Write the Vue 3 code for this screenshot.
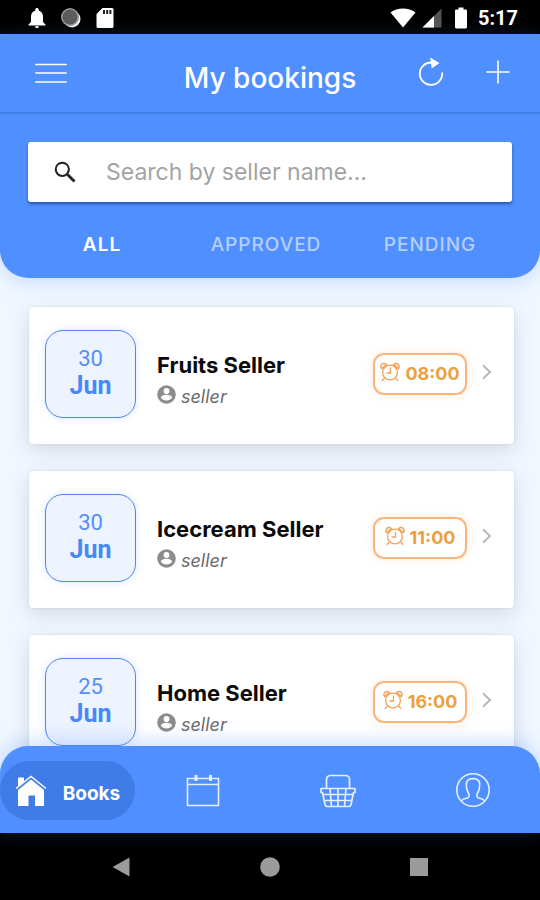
<script setup>
import { ref } from 'vue'

const tabs = ['ALL', 'APPROVED', 'PENDING']
const activeTab = ref('ALL')
const query = ref('')

const bookings = [
  { day: '30', month: 'Jun', name: 'Fruits Seller', role: 'seller', time: '08:00' },
  { day: '30', month: 'Jun', name: 'Icecream Seller', role: 'seller', time: '11:00' },
  { day: '25', month: 'Jun', name: 'Home Seller', role: 'seller', time: '16:00' },
]
</script>

<template>
  <div class="screen">
    <div class="status">
      <div class="status-group status-left">
        <svg width="18" height="22" viewBox="0 0 18 22" fill="#fff">
          <path d="M9 1c1 0 1.700.7 1.700 1.600v.8C13.500 4.200 15 6.600 15 9.500V15l2.500 2.400V18.500H.5v-1.100L3 15V9.500c0-2.900 1.500-5.300 4.300-6.100v-.8C7.300 1.700 8 1 9 1z" />
          <path d="M7 19.200h4a2 2 0 0 1-4 0z" />
        </svg>
        <svg width="22" height="22" viewBox="0 0 22 22">
          <circle cx="12" cy="12" r="8.500" fill="#eee" />
          <circle cx="10" cy="10" r="9" fill="#999" />
          <circle cx="10" cy="10" r="7.500" fill="#5c5c5c" />
        </svg>
        <svg width="18" height="22" viewBox="0 0 18 22">
          <path d="M6.500 1H16a1.500 1.500 0 0 1 1.500 1.500v17A1.500 1.500 0 0 1 16 21H2a1.500 1.500 0 0 1-1.500-1.500V7z" fill="#fff" />
          <path d="M7 3h2v4H7zM10.200 3h2v4h-2zM13.400 3h2v4h-2z" fill="#222" />
        </svg>
      </div>
      <div class="status-group status-right">
        <svg width="26" height="20" viewBox="0 0 26 20" fill="#fff">
          <path d="M.5 4.500C4 1.800 8.300.5 13 .5s9 1.300 12.500 4L13 19.500z" />
        </svg>
        <svg width="20" height="20" viewBox="0 0 20 20">
          <path d="M19.500.5v19H.5z" fill="#555" />
          <path d="M12 8v11.500H.5z" fill="#fff" />
        </svg>
        <svg class="battery" width="14" height="22" viewBox="0 0 14 22" fill="#fff">
          <path d="M4.500.5h5v2h2.200c.7 0 1.300.5 1.300 1.200v16.600c0 .7-.6 1.200-1.300 1.200H2.300C1.600 21.500 1 21 1 20.300V3.700c0-.7.6-1.200 1.300-1.200h2.200z" />
        </svg>
        <span class="clock">5:17</span>
      </div>
    </div>

    <header class="header">
      <div class="appbar">
        <button class="icon-btn menu" type="button" aria-label="Menu">
          <svg width="32" height="22" viewBox="0 0 32 22" stroke="#fff" stroke-width="1.600" stroke-linecap="round">
            <path d="M.8 2.500h30.400M.8 11h30.400M.8 20h30.400" />
          </svg>
        </button>
        <h1 class="title">My bookings</h1>
        <div class="actions">
          <button class="icon-btn" type="button" aria-label="Refresh">
            <svg width="26" height="30" viewBox="0 0 26 30" fill="none">
              <path d="M13.500 5.500A11.200 11.200 0 1 0 24.200 16.200" stroke="#fff" stroke-width="1.800" stroke-linecap="round" />
              <path d="M12.200.5 21.500 6l-7.800 5.500z" fill="#fff" />
            </svg>
          </button>
          <button class="icon-btn" type="button" aria-label="Add booking">
            <svg width="24" height="24" viewBox="0 0 24 24" stroke="#fff" stroke-width="1.600" stroke-linecap="round">
              <path d="M12 1v22M1 12h22" />
            </svg>
          </button>
        </div>
      </div>

      <div class="search">
        <label for="seller-search" aria-label="Search sellers">
          <svg width="22" height="22" viewBox="0 0 22 22" fill="none" stroke="#222">
            <circle cx="8.300" cy="8.300" r="6.600" stroke-width="2" />
            <path d="M13.500 13.500 20.500 20.500" stroke-width="2.800" />
          </svg>
        </label>
        <input id="seller-search" v-model="query" type="text" placeholder="Search by seller name..." />
      </div>

      <div class="tabs">
        <button
          v-for="tab in tabs"
          :key="tab"
          type="button"
          class="tab"
          :class="{ active: tab === activeTab }"
          @click="activeTab = tab"
        >{{ tab }}</button>
      </div>
    </header>

    <main class="list">
      <article v-for="b in bookings" :key="b.name" class="card">
        <div class="date">
          <span class="day">{{ b.day }}</span>
          <span class="month">{{ b.month }}</span>
        </div>
        <div class="info">
          <h2 class="name">{{ b.name }}</h2>
          <p class="role">
            <svg width="19" height="19" viewBox="0 0 19 19">
              <circle cx="9.500" cy="9.500" r="9.300" fill="#8c8c8c" />
              <circle cx="9.500" cy="6" r="2.900" fill="#fff" />
              <path d="M3.800 12.600c0-1.900 3.600-2.900 5.700-2.900s5.700 1 5.700 2.900c-1.200 1.900-3.300 3-5.700 3s-4.500-1.100-5.700-3z" fill="#fff" />
            </svg>
            <span>{{ b.role }}</span>
          </p>
        </div>
        <div class="time">
          <svg width="20" height="20" viewBox="0 0 20 20" fill="none" stroke="#f0a35c" stroke-width="1.300" stroke-linecap="round">
            <circle cx="10" cy="10.500" r="7.400" />
            <path d="M10.500 6v5H7M4 16.500l-1.800 2M16 16.500l1.800 2" />
            <path d="M1.600 6.600A3 3 0 1 1 6.500 2.700zM18.400 6.600a3 3 0 1 0-4.900-3.900z" stroke-width="1.500" />
          </svg>
          <span>{{ b.time }}</span>
        </div>
        <svg class="chevron" width="11" height="16" viewBox="0 0 11 16" fill="none" stroke="#b8b8b8" stroke-width="2">
          <path d="M2 1.200 9 8l-7 6.800" />
        </svg>
      </article>
    </main>

    <nav class="bottom">
      <a class="nav-item current" href="#books">
        <svg width="32" height="32" viewBox="0 0 32 32">
          <path d="M3 2.500h6v4L3 12z" fill="#fff" />
          <path d="M1 13.500 16 1.500l15 12" fill="none" stroke="#fff" stroke-width="1.500" />
          <path d="M3 15 16 4.500 29 15V31h-9V20.500h-6.500V31H3z" fill="#fff" />
        </svg>
        <span>Books</span>
      </a>
      <a class="nav-item" href="#calendar" aria-label="Calendar">
        <svg width="34" height="34" viewBox="0 0 34 34" fill="none" stroke="#e4efff" stroke-width="1.600">
          <path d="M1.500 4.500h31v27h-31zM1.500 10.500h31" />
          <path d="M10 1v6M24.500 1v6" stroke-width="3" />
        </svg>
      </a>
      <a class="nav-item" href="#basket" aria-label="Basket">
        <svg width="36" height="34" viewBox="0 0 36 34" fill="none" stroke="#e4efff" stroke-width="1.700" stroke-linejoin="round">
          <path d="M6.500 14.500V5.500a4 4 0 0 1 4-4h15a4 4 0 0 1 4 4v9" />
          <path d="M1 14.500h34v4h-1.500l-2.500 12a2.500 2.500 0 0 1-2.500 2H7.500a2.500 2.500 0 0 1-2.500-2L2.500 18.500H1z" />
          <path d="M2.500 20.500h31M4 26.500h28M10 14.500l1.500 18M18 14.500v18M26 14.500l-1.500 18" />
        </svg>
      </a>
      <a class="nav-item" href="#profile" aria-label="Profile">
        <svg width="36" height="36" viewBox="0 0 36 36" fill="none" stroke="#e4efff" stroke-width="1.600">
          <circle cx="18" cy="17" r="16.200" />
          <path d="M6.200 28c1.500-2.300 4.300-2.500 6.600-3.300 1.500-.6 1.700-2.700.8-4.200-1.700-2.700-2.300-5.500-2.300-9C11.300 7.500 14 5.600 18 5.600s6.700 1.900 6.700 5.900c0 3.500-.6 6.300-2.300 9-.9 1.500-.7 3.600.8 4.200 2.300.8 5.100 1 6.600 3.300" />
        </svg>
      </a>
    </nav>

    <div class="system">
      <button class="icon-btn" type="button" aria-label="Back">
        <svg width="20" height="20" viewBox="0 0 20 20" fill="#9b9b9b"><path d="M18.500.5v19L1.500 10z" /></svg>
      </button>
      <button class="icon-btn" type="button" aria-label="Home">
        <svg width="20" height="20" viewBox="0 0 20 20" fill="#9b9b9b"><circle cx="10" cy="10" r="9.800" /></svg>
      </button>
      <button class="icon-btn" type="button" aria-label="Overview">
        <svg width="20" height="20" viewBox="0 0 20 20" fill="#9b9b9b"><rect x="1" y="1" width="18" height="18" /></svg>
      </button>
    </div>
  </div>
</template>

<style>
body {
  margin: 0;
}
</style>

<style scoped>
* {
  box-sizing: border-box;
}

.screen {
  display: flex;
  flex-direction: column;
  height: 100vh;
  overflow: hidden;
  background: #f1f7ff;
  font-family: Inter, "Open Sans", sans-serif;
}

svg {
  display: block;
  flex: none;
}

button {
  font: inherit;
  border: 0;
  padding: 0;
  background: none;
  cursor: pointer;
}

.status {
  flex: none;
  display: flex;
  justify-content: space-between;
  align-items: center;
  height: 34px;
  padding: 2px 22px 0 28px;
  background: #000;
}

.status-group {
  display: flex;
  align-items: center;
}

.status-left {
  gap: 14px;
}

.status-right {
  gap: 6px;
}

.battery {
  margin: 0 4px 0 6px;
}

.clock {
  color: #fff;
  font: 700 20px/24px Roboto, sans-serif;
}

.header {
  flex: none;
  position: relative;
  z-index: 1;
  background: #508fff;
  border-radius: 0 0 28px 28px;
  box-shadow: 0 4px 20px rgba(80, 143, 255, 0.25);
}

.appbar {
  display: grid;
  grid-template-columns: 1fr auto 1fr;
  align-items: center;
  height: 80px;
  padding: 0 30px;
  border-bottom: 2px solid #4280e8;
}

.menu {
  justify-self: start;
  padding-left: 5px;
}

.title {
  margin: 0;
  padding-top: 10px;
  color: #fff;
  font-size: 28px;
  font-weight: 500;
  line-height: 32px;
}

.actions {
  display: flex;
  justify-content: flex-end;
  align-items: center;
  gap: 42px;
}

.actions svg {
  margin-bottom: 3px;
}

.search {
  display: flex;
  align-items: center;
  height: 60px;
  margin: 28px 28px 0;
  padding: 0 26px;
  gap: 30px;
  background: #fff;
  border-radius: 3px;
  box-shadow: 0 2px 3px rgba(0, 30, 90, 0.5);
}

.search input {
  flex: 1;
  min-width: 0;
  padding: 0;
  border: 0;
  outline: 0;
  background: none;
  color: #333;
  font: 400 23px/28px Inter, sans-serif;
}

.search input::placeholder {
  color: #a3a3a3;
  opacity: 1;
}

.tabs {
  display: grid;
  grid-template-columns: repeat(3, 1fr);
  padding: 23px 28px 13px 20px;
}

.tab {
  color: #b5d0ff;
  font-size: 19px;
  font-weight: 500;
  line-height: 40px;
  letter-spacing: 1px;
}

.tab.active {
  color: #fff;
  font-weight: 600;
}

.list {
  flex: 1;
  min-height: 0;
  display: flex;
  flex-direction: column;
  gap: 27px;
  margin-bottom: -28px;
  padding: 29px 26px 0 29px;
  overflow: hidden;
}

.card {
  flex: none;
  display: flex;
  align-items: center;
  padding: 23px 22px 26px 16px;
  background: #fff;
  border-radius: 4px;
  box-shadow: 0 0 2px rgba(0, 0, 0, 0.12), 0 6px 20px rgba(40, 60, 90, 0.16);
}

.date {
  display: flex;
  flex-direction: column;
  align-items: center;
  width: 91px;
  height: 88px;
  padding-top: 15px;
  border: 1px solid #4f86e8;
  border-radius: 18px;
  background: #edf3ff;
  box-shadow: 0 0 8px rgba(80, 143, 255, 0.2);
  font-family: Roboto, sans-serif;
}

.day {
  color: #5590f5;
  font-size: 22px;
  line-height: 26px;
}

.month {
  color: #4488fa;
  font-size: 25px;
  font-weight: 700;
  line-height: 28px;
}

.info {
  flex: 1;
  padding: 13px 0 0 21px;
}

.name {
  margin: 0;
  color: #0a0a0a;
  font-size: 22px;
  font-weight: 700;
  line-height: 28px;
}

.role {
  display: flex;
  align-items: center;
  gap: 5px;
  margin: 4px 0 0;
  color: #6c6c6c;
  font-size: 18px;
  font-style: italic;
  line-height: 28px;
}

.role svg {
  margin-bottom: 5px;
}

.time {
  display: flex;
  align-items: center;
  justify-content: center;
  gap: 5px;
  width: 94px;
  height: 42px;
  border: 2px solid #f8b67c;
  border-radius: 11px;
  box-shadow: 0 0 8px rgba(255, 150, 60, 0.2);
  color: #eba03e;
  font-size: 18px;
  font-weight: 700;
  line-height: 24px;
}

.time svg {
  margin-bottom: 4px;
}

.chevron {
  margin: 0 0 4px 14px;
}

.bottom {
  flex: none;
  position: relative;
  z-index: 1;
  display: grid;
  grid-template-columns: repeat(4, 1fr);
  padding: 15px 0 13px;
  background: #508fff;
  border-radius: 28px 28px 0 0;
  box-shadow: 0 -4px 20px rgba(80, 143, 255, 0.3);
}

.nav-item {
  display: flex;
  align-items: center;
  justify-content: center;
  gap: 16px;
  height: 59px;
  border-radius: 30px;
  color: #fff;
  font-size: 19px;
  font-weight: 700;
  text-decoration: none;
}

.nav-item.current {
  background: #407ce8;
}

.nav-item span {
  padding-top: 6px;
}

.system {
  flex: none;
  display: grid;
  grid-template-columns: repeat(3, 1fr);
  justify-items: center;
  align-items: center;
  height: 67px;
  padding: 0 47px;
  background: #000;
}
</style>
